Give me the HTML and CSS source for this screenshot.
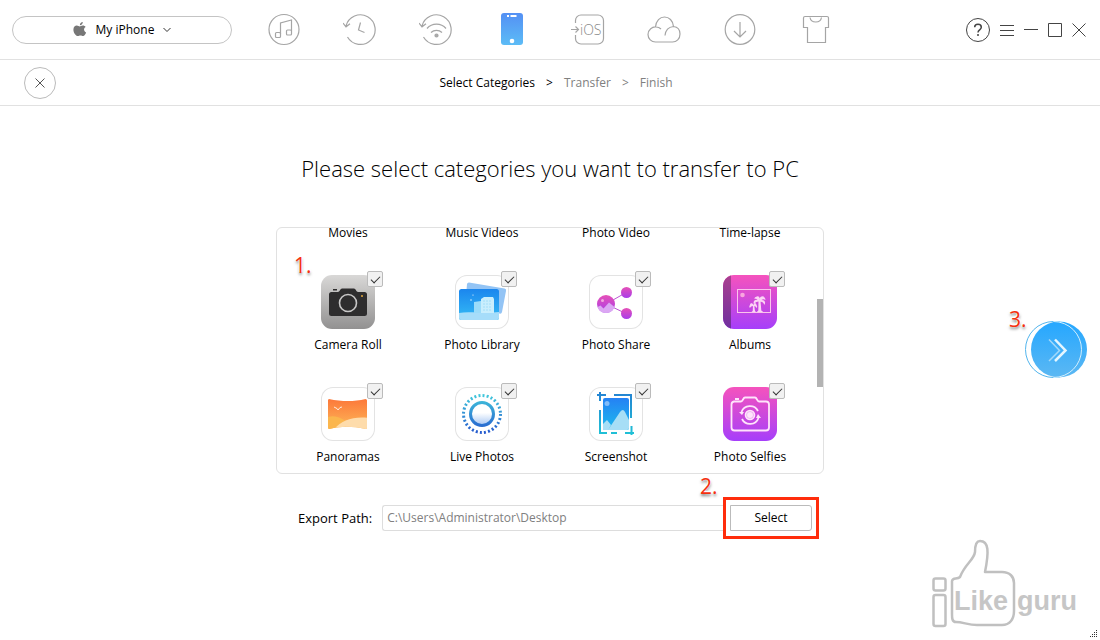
FILE: index.html
```html
<!DOCTYPE html>
<html lang="en">
<head>
    <meta charset="UTF-8">
    <meta name="viewport" content="width=device-width, initial-scale=1.0">
    <title>Transfer to PC</title>
    <link rel="stylesheet" href="styles.css">
</head>
<body>
    <header class="topbar">
        <button type="button" class="device">
            <svg width="14" height="15" viewBox="0 0 14 15" fill="#777"><path d="M9.8 0c.1 1.600-1.300 3.200-2.900 3.200C6.700 1.700 8.200.2 9.800 0zM12.600 5.100c-2.300 1.400-1.900 4.400.5 5.400-.5 1.500-1.700 3.500-3 3.500-1 0-1.500-.6-2.600-.6s-1.700.6-2.600.6C2.700 14 .4 10.600.4 7.700c0-2.700 1.700-4.100 3.400-4.100 1.200 0 2.200.8 2.900.8.700 0 1.800-.9 3.300-.8 1 0 2 .5 2.600 1.500z"/></svg>
            <span>My iPhone</span>
            <svg width="8" height="6" viewBox="0 0 8 6" fill="none" stroke="#333"><path d="M.5 1L4 4.500 7.500 1"/></svg>
        </button>
        <nav class="tools">
            <button type="button" aria-label="Media">
                <svg width="34" height="34" viewBox="0 0 34 34"><circle cx="17" cy="16.500" r="15"/><path d="M13.500 21V10l11-3v11"/><rect x="8.500" y="19.500" width="5" height="5" rx="1"/><rect x="19.500" y="17" width="5" height="5" rx="1"/></svg>
            </button>
            <button type="button" aria-label="History">
                <svg width="34" height="34" viewBox="0 0 34 34"><path d="M3 13A14.800 14.800 0 1 1 4.500 24M0 10l3 3.800 4-3M17.500 9.500l-2 7.500 6 2.500"/></svg>
            </button>
            <button type="button" aria-label="Wi-Fi backup">
                <svg width="34" height="34" viewBox="0 0 34 34"><path d="M3 13A14.800 14.800 0 1 1 4.500 24M0 10l3 3.800 4-3M8 15.500a12.500 12.500 0 0 1 19 0M12 19.500a8 8 0 0 1 11 0"/><circle cx="17.500" cy="22.500" r="1.500" class="solid"/></svg>
            </button>
            <button type="button" aria-label="Device" class="active">
                <svg width="34" height="34" viewBox="0 0 34 34">
                    <defs><linearGradient id="phone" x2="0" y2="1"><stop stop-color="#5490f4"/><stop offset="1" stop-color="#5cbcf6"/></linearGradient></defs>
                    <rect x="6" y="0" width="22" height="32" rx="3" fill="url(#phone)" stroke="none"/>
                    <path d="M12 3h2M15.500 3h6" stroke="#fff" stroke-width="2"/><circle cx="17" cy="28" r="2.300" fill="#fff" stroke="none"/>
                </svg>
            </button>
            <button type="button" aria-label="Move to iOS">
                <svg width="34" height="34" viewBox="0 0 34 34"><path d="M4.500 10V7.500A5.500 5.500 0 0 1 10 2h17a5.500 5.500 0 0 1 5.500 5.500v18A5.500 5.500 0 0 1 27 31H10a5.500 5.500 0 0 1-5.500-5.500V22M0 16.500h7M4.500 13.500l3 3-3 3"/><text x="9" y="21.500">iOS</text></svg>
            </button>
            <button type="button" aria-label="Cloud">
                <svg width="34" height="34" viewBox="0 0 34 34"><path d="M8.500 14C9 7.500 13 4 17.500 4S26 7.500 26.500 13.500c4 .5 6.500 3.500 6.500 7.500 0 5-3.500 8-7.500 8h-17C4.500 29 1 26 1 21.500c0-5 4.500-8 8-7.500 2 0 4 1 5 2M26.500 13.500c-5 .5-8 4-8.500 9"/></svg>
            </button>
            <button type="button" aria-label="Download">
                <svg width="34" height="34" viewBox="0 0 34 34"><circle cx="17" cy="16.500" r="14.800"/><path d="M17 9v15M11 18l6 6 6-6"/></svg>
            </button>
            <button type="button" aria-label="Skins">
                <svg width="34" height="34" viewBox="0 0 34 34"><path d="M6 3.500h22a1.500 1.500 0 0 1 1.500 1.500v9.500H26.500v15H8.500v-15H4.500V5A1.500 1.500 0 0 1 6 3.500zM11 4.500c1 6 10.500 6 11.500 0"/></svg>
            </button>
        </nav>
        <div class="window-buttons">
            <button type="button" aria-label="Help"><svg width="24" height="24" viewBox="0 0 24 24"><circle cx="12" cy="12" r="11.500"/><path stroke-width="1.500" d="M8.700 9.300c0-4 6.600-4 6.600 0 0 2.500-3.300 2.700-3.300 5.200M12 16v2"/></svg></button>
            <button type="button" aria-label="Menu"><svg width="14" height="14" viewBox="0 0 14 14"><path d="M0 2.500h14M0 7.500h14M0 12.500h14"/></svg></button>
            <button type="button" aria-label="Minimize"><svg width="14" height="14" viewBox="0 0 14 14"><path d="M0 6.500h14"/></svg></button>
            <button type="button" aria-label="Maximize"><svg width="14" height="14" viewBox="0 0 14 14"><path d="M.5.5h13v13H.5z"/></svg></button>
            <button type="button" aria-label="Close"><svg width="14" height="14" viewBox="0 0 14 14"><path d="M.5.5l13 13M13.500.5l-13 13"/></svg></button>
        </div>
    </header>

    <div class="subbar">
        <button type="button" class="cancel" aria-label="Cancel"><svg width="10" height="10" viewBox="0 0 10 10" fill="none" stroke="#555"><path d="M.5.5l9 9M9.500.5l-9 9"/></svg></button>
        <div class="steps">
            <span class="current">Select Categories</span>
            <span class="current">&gt;</span>
            <span>Transfer</span>
            <span>&gt;</span>
            <span>Finish</span>
        </div>
    </div>

    <main>
        <h1>Please select categories you want to transfer to PC</h1>

        <div class="stage">
            <div class="panel">
                <div class="categories">
                    <div class="category">Movies</div>
                    <div class="category">Music Videos</div>
                    <div class="category">Photo Video</div>
                    <div class="category">Time-lapse</div>

                    <label class="category">
                        <span class="icon">
                            <svg width="54" height="54" viewBox="0 0 54 54">
                                <defs><linearGradient id="gray" x2="0" y2="1"><stop stop-color="#d9d8d7"/><stop offset="1" stop-color="#929191"/></linearGradient></defs>
                                <rect width="54" height="54" rx="11" fill="url(#gray)"/>
                                <path d="M12 15.500v-1.500h4v1.500M10.500 17H17c1.500 0 2.500-3.500 4-3.500h12c1.500 0 2.500 3.500 4 3.500h6.500a2.500 2.500 0 0 1 2.500 2.500v19a2.500 2.500 0 0 1-2.500 2.500h-33A2.500 2.500 0 0 1 8 38.500v-19a2.500 2.500 0 0 1 2.500-2.500z" fill="#2e2d2e"/>
                                <circle cx="27" cy="28" r="8.500" fill="none" stroke="#c8c7c7" stroke-width="1.600"/><circle cx="41" cy="21" r="1" fill="#e5a93c"/>
                            </svg>
                            <input type="checkbox" checked>
                        </span>
                        Camera Roll
                    </label>
                    <label class="category">
                        <span class="icon framed">
                            <svg width="54" height="54" viewBox="0 0 54 54">
                                <defs><linearGradient id="sky" x2="0" y2="1"><stop stop-color="#1b86ee"/><stop offset="1" stop-color="#35bcf5"/></linearGradient></defs>
                                <path d="M14 7.500l35.500 6a2 2 0 0 1 1.500 2.500L47 37a2 2 0 0 1-2.500 1.500L10 32.500 12 9a2 2 0 0 1 2-1.500z" fill="#93c4f5"/>
                                <rect x="4" y="14" width="40" height="31" rx="2.500" fill="url(#sky)"/>
                                <path d="M4 38c10-2 25 1 40-1v5.500a2.500 2.500 0 0 1-2.500 2.500h-35A2.500 2.500 0 0 1 4 42.500z" fill="#a6ddfa"/>
                                <path d="M19 27l7-1v12h-7z" fill="#9bdcfa"/><path d="M26 24l3-2h9l1 2v14H26z" fill="#c9eefd"/>
                                <path d="M28 26h8M28 29h8M28 32h8M28 35h8M20.500 29h4M20.500 32h4M20.500 35h4" stroke="#9ad9f7" stroke-dasharray="2 1" stroke-width=".8"/>
                                <circle cx="16" cy="25" r="1" fill="#8ccaf9"/><circle cx="18" cy="20" r=".6" fill="#fff"/>
                            </svg>
                            <input type="checkbox" checked>
                        </span>
                        Photo Library
                    </label>
                    <label class="category">
                        <span class="icon framed">
                            <svg width="54" height="54" viewBox="0 0 54 54">
                                <defs><linearGradient id="pink" x2="0" y2="1"><stop stop-color="#e650b7"/><stop offset="1" stop-color="#a83dea"/></linearGradient></defs>
                                <path d="M17 29l21-12M17 29l21 10" stroke="#bd55d4" fill="none"/>
                                <circle cx="17" cy="29" r="9" fill="url(#pink)"/><circle cx="37.500" cy="17.500" r="5.500" fill="url(#pink)"/><circle cx="37.500" cy="38.500" r="5.500" fill="url(#pink)"/>
                                <path d="M8.500 32l3-1.500 3 3 5.500-6 5.500 4.500A9 9 0 0 1 8.500 32z" fill="#dba7f3"/><circle cx="13.500" cy="25.500" r="1.500" fill="#f1a8df"/>
                            </svg>
                            <input type="checkbox" checked>
                        </span>
                        Photo Share
                    </label>
                    <label class="category">
                        <span class="icon">
                            <svg width="54" height="54" viewBox="0 0 54 54">
                                <defs>
                                    <linearGradient id="magenta" x2="0" y2="1"><stop stop-color="#f553bd"/><stop offset="1" stop-color="#a63ffa"/></linearGradient>
                                    <linearGradient id="spine" x2="0" y2="1"><stop stop-color="#a9408f"/><stop offset="1" stop-color="#70309f"/></linearGradient>
                                </defs>
                                <rect width="54" height="54" rx="11" fill="url(#magenta)"/>
                                <path d="M8 .4v53.200A11 11 0 0 1 0 43V11A11 11 0 0 1 8 .4z" fill="url(#spine)"/>
                                <rect x="14.500" y="14.500" width="33" height="23" fill="none" stroke="#fbc3ec"/>
                                <circle cx="19.500" cy="20" r="2.300" fill="#f9a5df"/>
                                <g fill="#fbd5f4">
                                    <path d="M35.500 26h2l.8 9.500 2 1.500h-6.500l1.500-1.500z"/>
                                    <path d="M36.500 25c-1-4.500-5-4-5-1 1.500-.5 2.500 0 3 .8-2.800-.6-4.800 1.500-3.500 4.700 1-2 2.500-3 5-3 3 0 4.500 1 5.500 3.500 1.500-3 0-5.200-3-5 1-.8 2.500-1 4 0 0-3.500-4.500-4.500-6 0z"/>
                                    <path d="M33 22.500c1-2 3.500-1.500 3.700 1 .8-3 4.500-3 4.800-.5-2-.5-3 .5-4.500 2.500-1-1.500-2-2.500-4-3z"/>
                                    <path d="M30 31h1.300l.7 5 1 1h-4.500l1.200-1z"/>
                                    <path d="M30.500 30c-1-2.500-3.500-2-3.500 0-1 .8-.8 2 0 3 .5-1.300 1.500-2 3.500-2s2.500.7 3 2c1-1.200.8-2.200 0-3 0-2-2.300-2.500-3 0z"/>
                                </g>
                            </svg>
                            <input type="checkbox" checked>
                        </span>
                        Albums
                    </label>

                    <label class="category">
                        <span class="icon framed">
                            <svg width="54" height="54" viewBox="0 0 54 54">
                                <defs>
                                    <linearGradient id="sunset" x2="0" y2="1"><stop stop-color="#fc7639"/><stop offset="1" stop-color="#fdba59"/></linearGradient>
                                    <clipPath id="pano"><path d="M8 12c13 2.700 25 2.700 36.500 0q1.500 0 1.500 1.500v27q0 1.500-1.500 1.500c-13-3-25-3-36 0Q7 42 7 40.500v-27Q7 12 8 12z"/></clipPath>
                                </defs>
                                <g clip-path="url(#pano)"><path d="M7 11h40v32H7z" fill="url(#sunset)"/><path d="M7 30c8-2 12 1 18 4v9H7z" fill="#fbb64d"/><path d="M13 43c5-9 20-14 34-12v12z" fill="#fedcab"/></g>
                                <path d="M13 20l3 1.500 1 1.500 2-2.500 2-.5" fill="none" stroke="#fff" stroke-width=".8"/>
                            </svg>
                            <input type="checkbox" checked>
                        </span>
                        Panoramas
                    </label>
                    <label class="category">
                        <span class="icon framed">
                            <svg width="54" height="54" viewBox="0 0 54 54">
                                <defs>
                                    <linearGradient id="ring" gradientUnits="userSpaceOnUse" x1="0" y1="7" x2="0" y2="47"><stop stop-color="#42cbdc"/><stop offset="1" stop-color="#2456cd"/></linearGradient>
                                    <linearGradient id="lens" x2="0" y2="1"><stop offset=".45" stop-color="#fff"/><stop offset="1" stop-color="#a5c5f3"/></linearGradient>
                                </defs>
                                <circle cx="27" cy="27" r="18.500" fill="none" stroke="url(#ring)" stroke-width="3" stroke-dasharray="2 2.151"/>
                                <circle cx="27" cy="27" r="11.500" fill="url(#lens)" stroke="url(#ring)" stroke-width="3"/>
                            </svg>
                            <input type="checkbox" checked>
                        </span>
                        Live Photos
                    </label>
                    <label class="category">
                        <span class="icon framed">
                            <svg width="54" height="54" viewBox="0 0 54 54">
                                <defs>
                                    <linearGradient id="crop" gradientUnits="userSpaceOnUse" x1="0" y1="5" x2="0" y2="47"><stop stop-color="#2482d2"/><stop offset="1" stop-color="#20c1d6"/></linearGradient>
                                    <linearGradient id="shot" x2="0" y2="1"><stop stop-color="#2581f4"/><stop offset="1" stop-color="#1ebbed"/></linearGradient>
                                </defs>
                                <rect x="14" y="11" width="26" height="32" rx="2" fill="url(#shot)"/>
                                <path d="M19 43l12-18q3-4 5 0l4 8v8a2 2 0 0 1-2 2zM14 37l4-4 4 5-3 5h-5z" fill="#a7def6"/><circle cx="18" cy="16.500" r="2.500" fill="#82bcf9"/>
                                <path d="M8 8h9M11 5v9M25 8h17v23M11 23v23h7M22 46h6M42.500 39v9M36 46h9" fill="none" stroke="url(#crop)" stroke-width="2"/>
                            </svg>
                            <input type="checkbox" checked>
                        </span>
                        Screenshot
                    </label>
                    <label class="category">
                        <span class="icon">
                            <svg width="54" height="54" viewBox="0 0 54 54">
                                <rect width="54" height="54" rx="11" fill="url(#magenta)"/>
                                <g fill="none" stroke="#ffe4fb" stroke-width="1.800">
                                    <path d="M11 14.500h7c2 0 2-4 4-4h10c2 0 2 4 4 4h7a3 3 0 0 1 3 3v23a3 3 0 0 1-3 3H11.500a3 3 0 0 1-3-3v-23a3 3 0 0 1 2.500-3zM12 12h4"/>
                                    <path d="M18.500 25a9 9 0 0 1 16.500-1M35.500 31a9 9 0 0 1-16.500 1"/>
                                </g>
                                <circle cx="27" cy="28" r="5.300" fill="#ffe4fb"/><circle cx="27" cy="28" r="3.500" fill="none" stroke="#dd86e7" stroke-width=".5"/>
                                <path d="M16 25h5l-2 3zM33 31h5l-3-4z" fill="#ffe4fb"/>
                            </svg>
                            <input type="checkbox" checked>
                        </span>
                        Photo Selfies
                    </label>
                </div>
                <div class="scroll-thumb"></div>
                <span class="note note-one">1.</span>
            </div>

            <div class="next-wrap">
                <button type="button" class="next" aria-label="Next">
                    <svg width="62" height="58" viewBox="0 0 62 58">
                        <defs><linearGradient id="next" x2="0" y2="1"><stop stop-color="#25a7ff"/><stop offset="1" stop-color="#5cb8f3"/></linearGradient></defs>
                        <circle cx="28.500" cy="29.500" r="28" fill="#fff" stroke="#53b5ed"/>
                        <circle cx="34" cy="29.500" r="28" fill="url(#next)"/>
                        <path d="M28.500 1.500a28 28 0 0 1 0 56" fill="none" stroke="#d4effd"/>
                        <path d="M24 19.500l10.500 11L24 41" fill="none" stroke="#a3d9fa" stroke-width="1.500"/>
                        <path d="M30 19.500l10.500 11L30 41" fill="none" stroke="#e5f6ff" stroke-width="2.500"/>
                    </svg>
                </button>
                <span class="note note-three">3.</span>
            </div>
        </div>

        <form class="export">
            <label for="path">Export Path:</label>
            <input type="text" id="path" value="C:\Users\Administrator\Desktop" readonly>
            <div class="select-wrap">
                <button type="button">Select</button>
                <span class="note note-two">2.</span>
            </div>
        </form>
    </main>

    <div class="watermark">
        <svg width="150" height="92" viewBox="0 0 150 92">
            <g fill="none" stroke="#c0c0c0" stroke-width="2.500" stroke-linejoin="round">
                <rect x="2.500" y="40.500" width="12" height="12" rx="2"/>
                <rect x="2.500" y="57" width="12" height="31" rx="2"/>
                <path d="M21 43c1-4 5-1 8-4 5-13 14-17 15-25 0-7 1-11 5-11 9 0 9 11 5 31h17c8 0 12 5 12 11v28c0 8-4 14-12 14H46c-9 0-14-3-21-3-4 0-4-4-4-8z"/>
            </g>
            <text x="23" y="72">Like</text>
            <text x="86" y="72">guru</text>
        </svg>
    </div>
    <svg class="grip" width="8" height="8" viewBox="0 0 8 8" fill="#333"><path d="M6 0h1v1H6zM4 2h1v1H4zM6 2h1v1H6zM2 4h1v1H2zM4 4h1v1H4zM6 4h1v1H6zM0 6h1v1H0zM2 6h1v1H2zM4 6h1v1H4zM6 6h1v1H6z"/></svg>
</body>
</html>
```

FILE: styles.css
```css
* {
    box-sizing: border-box;
}
body {
    position: relative;
    min-height: 100vh;
    margin: 0;
    background-color: #fff;
    color: #000;
    font-family: "Open Sans", "Noto Sans", sans-serif;
    font-size: 12px;
    line-height: 16px;
    overflow: hidden;
}
button {
    padding: 0;
    border: none;
    background: none;
    color: inherit;
    font: inherit;
    cursor: pointer;
}
svg {
    display: block;
}
.topbar {
    display: flex;
    align-items: center;
    height: 60px;
    padding: 0 14px 0 12px;
    border-bottom: 1px solid #e1e1e1;
}
.device {
    display: flex;
    align-items: center;
    justify-content: center;
    gap: 9px;
    width: 220px;
    height: 28px;
    border: 1px solid #c4c4c4;
    border-radius: 14px;
}
.tools {
    display: flex;
    margin-left: 14px;
}
.tools button {
    display: flex;
    justify-content: center;
    width: 76px;
}
.tools svg {
    fill: none;
    stroke: #a5a5a5;
    stroke-width: 1.2;
}
.tools .solid {
    fill: #aaa;
}
.tools text {
    fill: #888;
    stroke: none;
    font-size: 14px;
    font-weight: 300;
}
.window-buttons {
    display: flex;
    align-items: center;
    gap: 10px;
    margin-left: auto;
}
.window-buttons svg {
    fill: none;
    stroke: #444;
}
.subbar {
    display: grid;
    grid-template-columns: 1fr auto 1fr;
    align-items: center;
    height: 46px;
    padding: 0 12px 0 24px;
    border-bottom: 1px solid #e1e1e1;
}
.cancel {
    display: flex;
    align-items: center;
    justify-content: center;
    width: 32px;
    height: 32px;
    border: 1px solid #bbb;
    border-radius: 50%;
}
.steps {
    display: flex;
    gap: 11px;
    color: #808080;
}
.steps .current {
    color: #000;
}
h1 {
    margin: 46px 0 42px;
    font-size: 22px;
    font-weight: 300;
    line-height: 33px;
    text-align: center;
}
.stage {
    display: grid;
    grid-template-columns: 1fr minmax(0, 548px) 1fr;
    align-items: center;
}
.panel {
    position: relative;
    grid-column: 2;
    border: 1px solid #e1e1e1;
    border-radius: 6px;
}
.categories {
    display: grid;
    grid-template-columns: repeat(4, 1fr);
    row-gap: 34px;
    margin-top: -3px;
    padding: 0 6px 8px 4px;
}
.category {
    display: flex;
    flex-direction: column;
    align-items: center;
    gap: 8px;
}
.icon {
    position: relative;
    width: 54px;
    height: 54px;
    border-radius: 12px;
}
.framed {
    box-shadow: inset 0 0 0 1px #e3e3e3;
}
.icon input {
    position: absolute;
    top: -4px;
    right: -8px;
    width: 16px;
    height: 16px;
    margin: 0;
    border: 1px solid #bbb;
    border-radius: 2px;
    background-color: #f1f1f1;
    appearance: none;
}
.icon input:checked::after {
    content: "";
    display: block;
    width: 8px;
    height: 4px;
    margin: 4px 3px;
    border: solid #333;
    border-width: 0 0 1px 1px;
    transform: rotate(-45deg);
}
.scroll-thumb {
    position: absolute;
    top: 29%;
    right: 0;
    width: 6px;
    height: 36%;
    background-color: #b3b3b3;
}
.next-wrap {
    position: relative;
    justify-self: end;
    margin-right: 13px;
}
.note {
    position: absolute;
    color: #f5300f;
    font-size: 21px;
    line-height: 24px;
    text-shadow: -1px -1px 1px #fff, 1px -1px 1px #fff, 0 2px 3px #777;
}
.note-one {
    top: 25px;
    left: 17px;
}
.note-two {
    top: -26px;
    left: -26px;
}
.note-three {
    top: -13px;
    left: -16px;
}
.export {
    display: flex;
    align-items: center;
    max-width: 548px;
    margin: 23px auto 0;
    padding: 0 5px 0 22px;
}
.export label {
    margin-right: 10px;
    font-size: 13px;
}
.export input {
    flex: 1;
    min-width: 0;
    height: 26px;
    padding: 0 4px 2px;
    border: 1px solid #ddd;
    border-right: none;
    border-radius: 3px 0 0 3px;
    color: #808080;
    font: inherit;
}
.select-wrap {
    position: relative;
    padding: 5px 4px;
    border: 3px solid #ff2d0c;
}
.select-wrap button {
    width: 82px;
    height: 26px;
    border: 1px solid #bbb;
    border-radius: 0 3px 3px 0;
}
.watermark {
    position: absolute;
    right: 19px;
    bottom: 10px;
}
.watermark text {
    fill: #c6c6c6;
    font: bold 27px "Liberation Sans", sans-serif;
}
.grip {
    position: absolute;
    right: 2px;
    bottom: 2px;
}
```
